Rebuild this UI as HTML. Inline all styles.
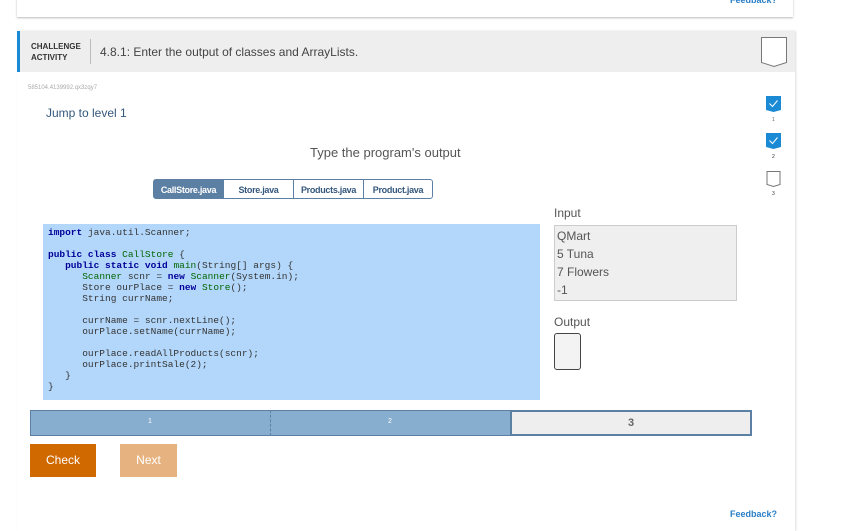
<!DOCTYPE html>
<html><head><style>
body{margin:0;width:847px;height:527px;background:#fff;position:relative;overflow:hidden;font-family:"Liberation Sans",sans-serif;}
.a{position:absolute;}
.code{font-family:"Liberation Mono",monospace;font-size:9.5px;line-height:11px;white-space:pre;color:#333;}
.k{color:#000099;font-weight:bold}.g{color:#006600}
.tab{position:absolute;top:179px;height:20px;font-size:9px;font-weight:bold;line-height:20px;text-align:center;border:1px solid #5c7fa4;color:#34577c;background:#fff;box-sizing:border-box;letter-spacing:-0.3px}
</style></head><body>
<div class="a" style="left:17px;top:-5px;width:776px;height:22px;background:#fff;box-shadow:0 1px 2px #bbb;"></div>
<div class="a" style="left:730px;top:-5px;font-size:9px;font-weight:bold;color:#2a7fc7;">Feedback?</div>

<div class="a" style="left:17px;top:31px;width:778px;height:500px;background:#fff;box-shadow:1px 0 2px #ddd;"></div>
<div class="a" style="left:17px;top:31px;width:778px;height:41px;background:#eeeeee;"></div>
<div class="a" style="left:17px;top:31px;width:3px;height:41px;background:#1a8ad4;"></div>
<div class="a" style="left:31px;top:41px;font-size:8px;font-weight:bold;color:#333;line-height:11px;">CHALLENGE<br>ACTIVITY</div>
<div class="a" style="left:90px;top:39px;width:1px;height:25px;background:#bbb;"></div>
<div class="a" style="left:100px;top:45px;font-size:12px;color:#444;">4.8.1: Enter the output of classes and ArrayLists.</div>
<svg class="a" style="left:760px;top:36px" width="28" height="32"><path d="M1.5 1.5H26.5V26.5L14 30.5L1.5 26.5Z" fill="#fff" stroke="#777" stroke-width="1"/></svg>

<div class="a" style="left:28px;top:85px;font-size:6px;color:#aaa;">585104.4139992.qx3zqy7</div>
<div class="a" style="left:46px;top:106px;font-size:12px;color:#34577c;">Jump to level 1</div>

<svg class="a" style="left:766px;top:96px" width="15" height="17"><path d="M0 0H15V14L7.5 16L0 14Z" fill="#1a8ad4"/><path d="M3.5 7.5L6.5 10.5L11.5 4.5" stroke="#fff" fill="none" stroke-width="1"/></svg>
<div class="a" style="left:772px;top:117px;font-size:5px;color:#666;">1</div>
<svg class="a" style="left:766px;top:133px" width="15" height="17"><path d="M0 0H15V14L7.5 16L0 14Z" fill="#1a8ad4"/><path d="M3.5 7.5L6.5 10.5L11.5 4.5" stroke="#fff" fill="none" stroke-width="1"/></svg>
<div class="a" style="left:772px;top:154px;font-size:5px;color:#333;">2</div>
<svg class="a" style="left:766px;top:171px" width="15" height="17"><path d="M1 0.5H14V13.5L7.5 15.5L1 13.5Z" fill="#fff" stroke="#777"/></svg>
<div class="a" style="left:772px;top:191px;font-size:5px;color:#333;">3</div>

<div class="a" style="left:310px;top:145px;font-size:13px;color:#555;">Type the program's output</div>

<div class="tab" style="left:153px;width:71px;background:#5c7fa4;color:#fff;border-radius:3px 0 0 3px;">CallStore.java</div>
<div class="tab" style="left:223px;width:71px;">Store.java</div>
<div class="tab" style="left:293px;width:71px;">Products.java</div>
<div class="tab" style="left:363px;width:70px;border-radius:0 3px 3px 0;">Product.java</div>

<div class="a code" style="left:43px;top:224px;width:497px;height:176px;background:#b3d7fb;padding:3px 5px;box-sizing:border-box;"><span class="k">import</span> java.util.Scanner;

<span class="k">public class</span> <span class="g">CallStore</span> {
   <span class="k">public static void</span> <span class="g">main</span>(String[] args) {
      <span class="g">Scanner</span> scnr = <span class="k">new</span> <span class="g">Scanner</span>(System.in);
      Store ourPlace = <span class="k">new</span> <span class="g">Store</span>();
      String currName;

      currName = scnr.nextLine();
      ourPlace.setName(currName);

      ourPlace.readAllProducts(scnr);
      ourPlace.printSale(2);
   }
}</div>

<div class="a" style="left:554px;top:206px;font-size:12px;color:#555;">Input</div>
<div class="a" style="left:554px;top:225px;width:183px;height:76px;background:#efefef;border:1px solid #ccc;box-sizing:border-box;font-size:12px;line-height:18px;color:#555;padding:1px 2px;">QMart<br>5 Tuna<br>7 Flowers<br>-1</div>
<div class="a" style="left:554px;top:315px;font-size:12px;color:#555;">Output</div>
<div class="a" style="left:554px;top:333px;width:27px;height:37px;background:#f3f3f3;border:1px solid #444;border-radius:3px;box-sizing:border-box;"></div>

<div class="a" style="left:30px;top:410px;width:481px;height:26px;background:#87adcf;border:1px solid #5c7fa4;box-sizing:border-box;"></div>
<div class="a" style="left:270px;top:410px;width:0;height:26px;border-left:1px dashed #5c7fa4;"></div>
<div class="a" style="left:148px;top:418px;font-size:7px;color:#fff;">1</div>
<div class="a" style="left:388px;top:418px;font-size:7px;color:#fff;">2</div>
<div class="a" style="left:510px;top:410px;width:242px;height:26px;background:#eee;border:2px solid #5c7fa4;box-sizing:border-box;text-align:center;font-size:11px;font-weight:bold;color:#666;line-height:22px;">3</div>

<div class="a" style="left:30px;top:444px;width:66px;height:33px;background:#d06a00;color:#fff;font-size:12px;text-align:center;line-height:33px;">Check</div>
<div class="a" style="left:120px;top:444px;width:57px;height:33px;background:#e6b380;color:#fff;font-size:12px;text-align:center;line-height:33px;">Next</div>

<div class="a" style="left:730px;top:509px;font-size:9px;font-weight:bold;color:#2a7fc7;">Feedback?</div>
</body></html>
